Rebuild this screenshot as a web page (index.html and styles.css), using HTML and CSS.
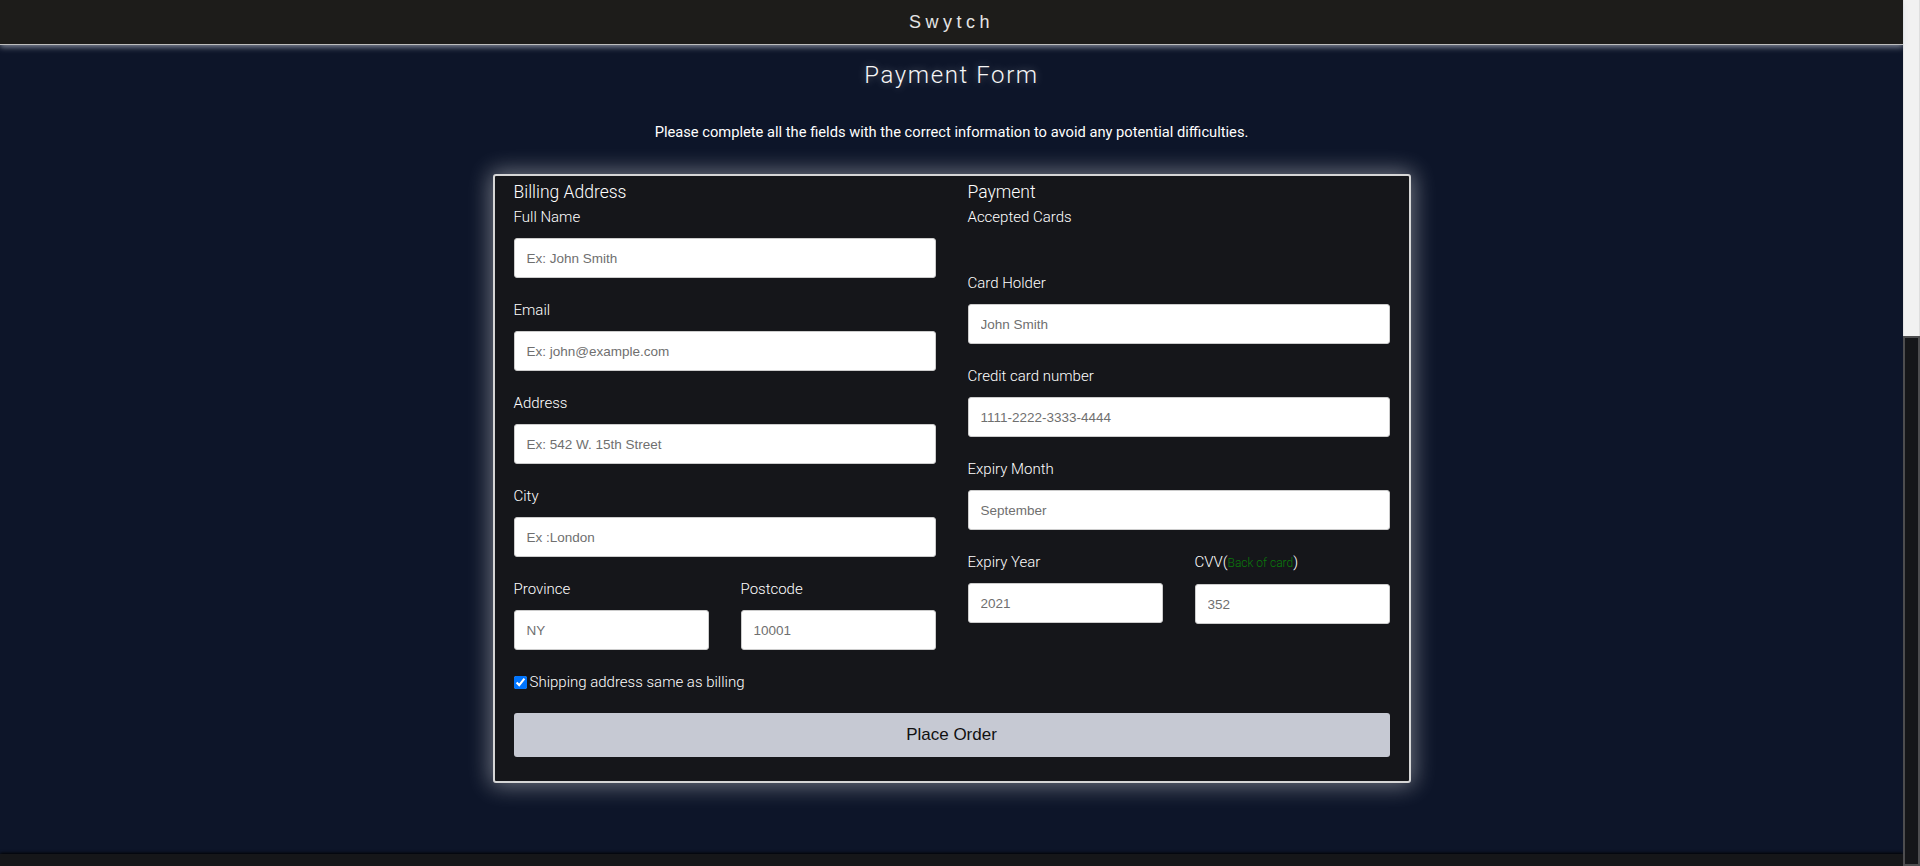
FILE: index.html
```html
<!DOCTYPE html>
<html lang="en">
<head>
<meta charset="utf-8">
<title>Swytch - Payment Form</title>
<link rel="stylesheet" href="styles.css">
</head>
<body>
<div class="app">
  <div class="page">
    <header class="topbar">Swytch</header>
    <main class="main">
      <h1 class="title">Payment Form</h1>
      <p class="subtitle">Please complete all the fields with the correct information to avoid any potential difficulties.</p>
      <form class="card">
        <div class="columns">
          <div class="col">
            <h3 class="col-title">Billing Address</h3>
            <div class="field">
              <label class="label">Full Name</label>
              <input class="input" type="text" placeholder="Ex: John Smith">
            </div>
            <div class="field">
              <label class="label">Email</label>
              <input class="input" type="text" placeholder="Ex: john@example.com">
            </div>
            <div class="field">
              <label class="label">Address</label>
              <input class="input" type="text" placeholder="Ex: 542 W. 15th Street">
            </div>
            <div class="field">
              <label class="label">City</label>
              <input class="input" type="text" placeholder="Ex :London">
            </div>
            <div class="pair">
              <div class="field">
                <label class="label">Province</label>
                <input class="input" type="text" placeholder="NY">
              </div>
              <div class="field">
                <label class="label">Postcode</label>
                <input class="input" type="text" placeholder="10001">
              </div>
            </div>
            <label class="check"><input class="checkbox" type="checkbox" checked>Shipping address same as billing</label>
          </div>
          <div class="col">
            <h3 class="col-title">Payment</h3>
            <label class="label">Accepted Cards</label>
            <div class="icons"></div>
            <div class="field">
              <label class="label">Card Holder</label>
              <input class="input" type="text" placeholder="John Smith">
            </div>
            <div class="field">
              <label class="label">Credit card number</label>
              <input class="input" type="text" placeholder="1111-2222-3333-4444">
            </div>
            <div class="field">
              <label class="label">Expiry Month</label>
              <input class="input" type="text" placeholder="September">
            </div>
            <div class="pair">
              <div class="field">
                <label class="label">Expiry Year</label>
                <input class="input" type="text" placeholder="2021">
              </div>
              <div class="field">
                <label class="label">CVV(<span class="hint">Back of card</span>)</label>
                <input class="input" type="text" placeholder="352">
              </div>
            </div>
          </div>
        </div>
        <button class="submit" type="button">Place Order</button>
      </form>
    </main>
    <footer class="footer"></footer>
  </div>
  <div class="scrollbar" aria-hidden="true">
    <div class="scroll-track"></div>
    <div class="scroll-thumb"></div>
  </div>
</div>
</body>
</html>
```
FILE: styles.css
```css
html, body {
  margin: 0;
  padding: 0;
  height: 100%;
  overflow: hidden;
  background: #0d1529;
}

.app {
  display: flex;
  height: 100vh;
}

.page {
  flex: 1;
  min-width: 0;
  display: flex;
  flex-direction: column;
  background: #0d1529;
}

.scrollbar {
  flex: none;
  width: 17px;
  display: flex;
  flex-direction: column;
}

.scroll-track {
  height: 336px;
  flex: none;
  background: #f1f1f1;
  box-shadow: inset 1px 0 0 #e4e4e4, inset -1px 0 0 #dedede;
}

.scroll-thumb {
  flex: 1;
  box-sizing: border-box;
  background: #151619;
  border: 2px solid #4d4d4f;
}

.topbar {
  position: relative;
  z-index: 5;
  flex: none;
  height: 44px;
  line-height: 44px;
  background: #1d1c1a;
  color: #e4e4e4;
  text-align: center;
  font-family: "Liberation Sans", Arial, sans-serif;
  font-size: 18px;
  letter-spacing: 4.5px;
  box-shadow: 0 1px 0 #bdbdbd, 0 3px 6px rgba(215, 220, 232, 0.6);
}

.main {
  flex: 1;
  padding-top: 17px;
  display: flex;
  flex-direction: column;
  align-items: center;
  font-family: Roboto, "Liberation Sans", sans-serif;
  color: #ffffff;
}

.title {
  margin: 0 0 34px;
  font-size: 24px;
  line-height: 28px;
  font-weight: 300;
  letter-spacing: 1.6px;
  color: #f6f6f6;
  text-shadow: 0 0 8px rgba(255, 255, 255, 0.35);
}

.subtitle {
  margin: 0 0 33px;
  font-size: 14.7px;
  line-height: 18px;
  color: #ffffff;
}

.card {
  box-sizing: border-box;
  width: 918px;
  height: 609px;
  padding: 6px 19px 24px;
  background: #15161a;
  border: 2px solid #d6d6d6;
  border-radius: 3px;
  box-shadow: 0 0 22px 3px rgba(255, 255, 255, 0.4);
  display: flex;
  flex-direction: column;
}

.columns {
  display: grid;
  grid-template-columns: 1fr 1fr;
  column-gap: 32px;
}

.col {
  display: flex;
  flex-direction: column;
}

.col-title {
  margin: 0 0 6px;
  font-size: 17.5px;
  line-height: 20px;
  font-weight: 300;
  color: #ffffff;
}

.label {
  display: block;
  font-size: 15px;
  line-height: 18px;
  font-weight: 300;
  color: #ffffff;
}

.field {
  display: flex;
  flex-direction: column;
  gap: 12px;
  margin-bottom: 23px;
}

.input {
  box-sizing: border-box;
  width: 100%;
  height: 40px;
  margin: 0;
  padding: 0 12px;
  border: 1px solid #cccccc;
  border-radius: 3px;
  background: #ffffff;
  font-family: "Liberation Sans", Arial, sans-serif;
  font-size: 13.5px;
  color: #333333;
  outline: none;
}

.input::placeholder {
  color: #6f6f6f;
}

.pair {
  display: grid;
  grid-template-columns: 1fr 1fr;
  column-gap: 32px;
}

.hint {
  font-size: 12px;
  color: #0a7d0a;
}

.icons {
  height: 25px;
  margin-bottom: 23px;
}

.check {
  display: flex;
  align-items: center;
  font-size: 15px;
  line-height: 18px;
  font-weight: 300;
  color: #ffffff;
}

.checkbox {
  width: 13px;
  height: 13px;
  margin: 0 3px 0 0;
}

.submit {
  margin-top: 22px;
  height: 44px;
  width: 100%;
  border: none;
  border-radius: 3px;
  background: #c6c9d3;
  color: #111111;
  font-family: "Liberation Sans", Arial, sans-serif;
  font-size: 17px;
  cursor: pointer;
}

.footer {
  flex: none;
  height: 12px;
  background: #151619;
  box-shadow: 0 -1px 3px #000000;
}
```
